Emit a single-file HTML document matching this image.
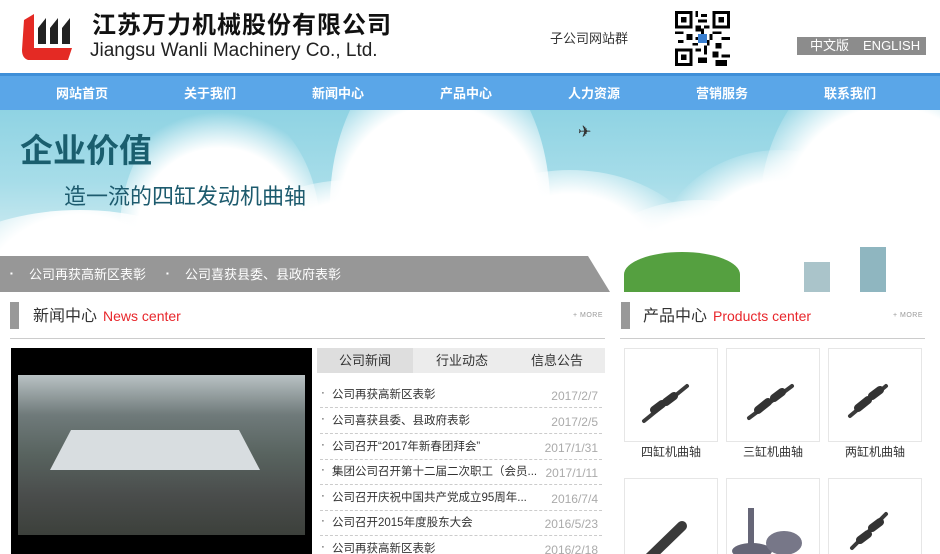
<!DOCTYPE html>
<html><head><meta charset="utf-8"><style>
*{margin:0;padding:0;box-sizing:border-box;line-height:1.15}
html,body{width:940px;height:554px;overflow:hidden}
body{background:#fff;font-family:"Liberation Sans","Noto Sans CJK SC",sans-serif;position:relative}
.a{position:absolute;white-space:nowrap}
.nav{left:0;top:73px;width:940px;height:37px;background:#5aa6e8;border-top:3px solid #3f8fd8}
.nav span{position:absolute;top:11px;color:#fff;font-size:13px;font-weight:bold;line-height:1}
.banner{left:0;top:110px;width:940px;height:182px;background:linear-gradient(180deg,#8fd3e3 0%,#a7dde9 40%,#d8eef3 80%,#e8f3f5 100%);overflow:hidden}
.cloud{position:absolute;background:radial-gradient(circle,#fff 50%,rgba(255,255,255,0) 72%);border-radius:50%}
.strip{left:0;top:256px;width:610px;height:36px;background:rgba(125,125,125,.8);clip-path:polygon(0 0,588px 0,610px 36px,0 36px)}
.strip span{position:absolute;top:12px;color:#fff;font-size:13px;line-height:1}
.ttl{font-size:16px;color:#333;line-height:1}
.ttl b{font-weight:normal;color:#e8262b;font-size:14px;margin-left:6px}
.more{font-size:7px;color:#999;letter-spacing:.5px;line-height:1}
.row{position:absolute;left:320px;width:282px;height:26px;border-bottom:1px dashed #ccc;font-size:11.5px;color:#333}
.row i{font-style:normal;position:absolute;right:4px;top:8px;color:#aaa;font-size:12px;line-height:1}
.row s{text-decoration:none;position:absolute;left:12px;top:8px;line-height:1}
.row:before{content:"·";position:absolute;left:1px;top:6px;line-height:1}
.card{position:absolute;width:94px;height:94px;border:1px solid #e6e6e6;background:#fff}
.lbl{position:absolute;width:94px;text-align:center;font-size:12px;color:#333;line-height:1}
</style></head><body>
<svg class="a" style="left:20px;top:12px" width="54" height="50" viewBox="0 0 54 50">
<path d="M4 8 L14 2 L14 36 L52 36 L48 48 L8 48 Q2 46 2 38 Z" fill="#e42a24"/>
<path d="M18 16 L26 6 L26 32 L18 32 Z" fill="#222"/>
<path d="M30 16 L38 6 L38 32 L30 32 Z" fill="#222"/>
<path d="M42 16 L50 6 L50 32 L42 32 Z" fill="#222"/>
</svg>
<div class="a" style="left:92px;top:14px;font-size:24px;font-weight:bold;color:#111;letter-spacing:1px;line-height:1">江苏万力机械股份有限公司</div>
<div class="a" style="left:90px;top:41px;font-size:19px;color:#222;line-height:1">Jiangsu Wanli Machinery Co., Ltd.</div>
<div class="a" style="left:550px;top:32px;font-size:13px;color:#333;line-height:1">子公司网站群</div>
<svg class="a" style="left:674px;top:11px" width="57" height="55" viewBox="0 0 19 19" shape-rendering="crispEdges">
<rect width="19" height="19" fill="#fff"/>
<g fill="#000"><rect x="0" y="0" width="6" height="6"/><rect x="13" y="0" width="6" height="6"/><rect x="0" y="13" width="6" height="6"/></g>
<g fill="#fff"><rect x="1" y="1" width="4" height="4"/><rect x="14" y="1" width="4" height="4"/><rect x="1" y="14" width="4" height="4"/></g>
<g fill="#000"><rect x="2" y="2" width="2" height="2"/><rect x="15" y="2" width="2" height="2"/><rect x="2" y="15" width="2" height="2"/>
<rect x="7" y="0" width="1" height="2"/><rect x="9" y="1" width="2" height="1"/><rect x="8" y="3" width="3" height="1"/><rect x="7" y="5" width="2" height="2"/><rect x="10" y="5" width="2" height="1"/>
<rect x="0" y="7" width="3" height="1"/><rect x="4" y="8" width="2" height="2"/><rect x="1" y="10" width="2" height="1"/><rect x="13" y="7" width="3" height="1"/><rect x="16" y="9" width="3" height="1"/><rect x="14" y="11" width="2" height="2"/>
<rect x="7" y="13" width="2" height="1"/><rect x="10" y="12" width="1" height="3"/><rect x="8" y="16" width="3" height="2"/><rect x="13" y="14" width="2" height="2"/><rect x="16" y="15" width="3" height="1"/><rect x="14" y="17" width="4" height="2"/><rect x="12" y="8" width="1" height="2"/><rect x="6" y="11" width="2" height="1"/>
<rect x="7" y="9" width="1" height="1"/><rect x="11" y="10" width="1" height="2"/><rect x="9" y="6" width="1" height="2"/></g>
<rect x="8" y="8" width="3" height="3" fill="#3a7fd0"/>
</svg>
<div class="a" style="left:797px;top:37px;width:129px;height:18px;background:#8c8c8c;color:#fff;font-size:13px;line-height:18px"><span style="margin-left:13px;line-height:18px">中文版</span><span style="margin-left:14px;line-height:18px">ENGLISH</span></div>
<div class="a nav">
<span style="left:56px">网站首页</span><span style="left:184px">关于我们</span><span style="left:312px">新闻中心</span><span style="left:440px">产品中心</span><span style="left:568px">人力资源</span><span style="left:696px">营销服务</span><span style="left:824px">联系我们</span>
</div>
<div class="a banner">
<div class="cloud" style="left:-100px;top:100px;width:360px;height:220px"></div>
<div class="cloud" style="left:120px;top:-10px;width:200px;height:260px"></div>
<div class="cloud" style="left:210px;top:70px;width:280px;height:220px"></div>
<div class="cloud" style="left:330px;top:-70px;width:220px;height:330px"></div>
<div class="cloud" style="left:420px;top:60px;width:300px;height:240px"></div>
<div class="cloud" style="left:570px;top:90px;width:260px;height:200px"></div>
<div class="cloud" style="left:650px;top:40px;width:260px;height:240px"></div>
<div class="cloud" style="left:760px;top:-60px;width:260px;height:320px"></div>
<div class="a" style="left:624px;top:142px;width:116px;height:45px;background:#55a040;border-radius:50% 50% 0 0"></div>
<div class="a" style="left:860px;top:137px;width:26px;height:50px;background:#8fb6c0"></div>
<div class="a" style="left:804px;top:152px;width:26px;height:40px;background:#aac4ca"></div>
<div class="a" style="left:20px;top:24px;font-size:33px;font-weight:bold;color:#1a5e6e;line-height:1">企业价值</div>
<div class="a" style="left:64px;top:76px;font-size:22px;color:#1d5b6e;line-height:1">造一流的四缸发动机曲轴</div>
<div class="a" style="left:578px;top:15px;font-size:16px;color:#333;line-height:1">✈</div>
</div>
<div class="a strip"><span style="left:10px;font-size:8px;top:14px">▪</span><span style="left:29px">公司再获高新区表彰</span><span style="left:166px;font-size:8px;top:14px">▪</span><span style="left:185px">公司喜获县委、县政府表彰</span></div>
<div class="a" style="left:10px;top:302px;width:9px;height:27px;background:#999"></div>
<div class="a ttl" style="left:33px;top:308px">新闻中心<b>News center</b></div>
<div class="a more" style="left:573px;top:312px">+ MORE</div>
<div class="a" style="left:10px;top:338px;width:595px;height:1px;background:#ccc"></div>
<div class="a" style="left:11px;top:348px;width:301px;height:206px;background:#000"></div>
<div class="a" style="left:18px;top:375px;width:287px;height:160px;background:linear-gradient(180deg,#b9c2c4 0%,#6f7a7a 25%,#58635f 50%,#4a4d4c 75%,#3c403b 100%)"></div>
<div class="a" style="left:50px;top:420px;width:210px;height:50px;background:#d8dde0;clip-path:polygon(10% 20%,90% 20%,100% 100%,0 100%)"></div>
<div class="a" style="left:317px;top:348px;width:288px;height:25px;background:#ececec"></div>
<div class="a" style="left:317px;top:348px;width:96px;height:25px;background:#dedede"></div>
<div class="a" style="left:339px;top:354px;font-size:13px;color:#333;line-height:1">公司新闻</div>
<div class="a" style="left:436px;top:354px;font-size:13px;color:#333;line-height:1">行业动态</div>
<div class="a" style="left:531px;top:354px;font-size:13px;color:#333;line-height:1">信息公告</div>
<div class="row" style="top:382px"><s>公司再获高新区表彰</s><i>2017/2/7</i></div>
<div class="row" style="top:408px"><s>公司喜获县委、县政府表彰</s><i>2017/2/5</i></div>
<div class="row" style="top:434px"><s>公司召开“2017年新春团拜会”</s><i>2017/1/31</i></div>
<div class="row" style="top:459px"><s>集团公司召开第十二届二次职工（会员...</s><i>2017/1/11</i></div>
<div class="row" style="top:485px"><s>公司召开庆祝中国共产党成立95周年...</s><i>2016/7/4</i></div>
<div class="row" style="top:510px"><s>公司召开2015年度股东大会</s><i>2016/5/23</i></div>
<div class="row" style="top:536px"><s>公司再获高新区表彰</s><i>2016/2/18</i></div>
<div class="a" style="left:621px;top:302px;width:9px;height:27px;background:#999"></div>
<div class="a ttl" style="left:643px;top:308px">产品中心<b>Products center</b></div>
<div class="a more" style="left:893px;top:312px">+ MORE</div>
<div class="a" style="left:620px;top:338px;width:305px;height:1px;background:#ccc"></div>
<div class="card" style="left:624px;top:348px"></div><div class="card" style="left:726px;top:348px"></div><div class="card" style="left:828px;top:348px"></div>
<div class="card" style="left:624px;top:478px"></div><div class="card" style="left:726px;top:478px"></div><div class="card" style="left:828px;top:478px"></div>
<svg class="a" style="left:624px;top:348px" width="300" height="206">
<g stroke="#3a3a3a" stroke-width="4" stroke-linecap="round" fill="none">
<path d="M20 73 L63 38"/><path d="M125 70 L168 38"/><path d="M226 68 L262 38"/>
<path d="M25 210 L58 178" stroke-width="10"/><path d="M228 200 L262 166"/>
</g>
<g stroke="#333" stroke-width="8" stroke-linecap="round" fill="none">
<path d="M30 62 l8 -6 M42 54 l8 -6 M134 62 l10 -8 M150 50 l8 -6 M234 60 l10 -8 M248 48 l8 -6 M236 192 l8 -6 M248 180 l8 -6"/>
</g>
<g fill="#667"><rect x="124" y="160" width="6" height="40"/><ellipse cx="128" cy="203" rx="20" ry="8"/><ellipse cx="160" cy="195" rx="18" ry="12" fill="#778"/></g>
</svg>
<div class="lbl" style="left:624px;top:446px">四缸机曲轴</div>
<div class="lbl" style="left:726px;top:446px">三缸机曲轴</div>
<div class="lbl" style="left:828px;top:446px">两缸机曲轴</div>
</body></html>
